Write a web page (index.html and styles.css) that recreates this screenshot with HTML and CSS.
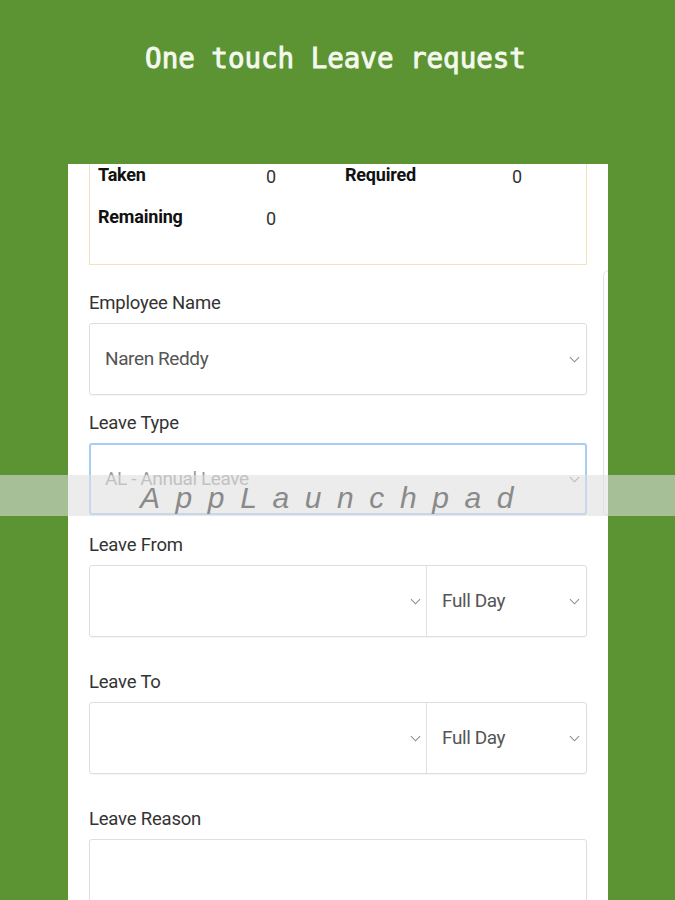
FILE: index.html
```html
<!DOCTYPE html>
<html>
<head>
<meta charset="utf-8">
<link rel="stylesheet" href="styles.css">
</head>
<body>
<header class="hero"><h1 class="title">One touch Leave request</h1></header>
<main class="panel">
  <div class="edge-card"></div>
  <section class="summary">
    <div class="s-label">Taken</div><div class="s-val">0</div><div class="s-label">Required</div><div class="s-val">0</div>
    <div class="s-label">Remaining</div><div class="s-val">0</div><div></div><div></div>
  </section>

  <div class="field f-emp">
    <div class="label">Employee Name</div>
    <div class="select"><span class="val">Naren Reddy</span><svg class="chev" viewBox="0 0 12 7"><path d="M1 1l5 5 5-5" fill="none" stroke="#8a8a8a" stroke-width="1.1"/></svg></div>
  </div>

  <div class="field f-type">
    <div class="label">Leave Type</div>
    <div class="select focus"><span class="val muted">AL - Annual Leave</span><svg class="chev" viewBox="0 0 12 7"><path d="M1 1l5 5 5-5" fill="none" stroke="#8a8a8a" stroke-width="1.1"/></svg></div>
  </div>

  <div class="field f-from">
    <div class="label">Leave From</div>
    <div class="split">
      <div class="part date"><span class="val"></span><svg class="chev" viewBox="0 0 12 7"><path d="M1 1l5 5 5-5" fill="none" stroke="#8a8a8a" stroke-width="1.1"/></svg></div>
      <div class="part day"><span class="val">Full Day</span><svg class="chev" viewBox="0 0 12 7"><path d="M1 1l5 5 5-5" fill="none" stroke="#8a8a8a" stroke-width="1.1"/></svg></div>
    </div>
  </div>

  <div class="field f-to">
    <div class="label">Leave To</div>
    <div class="split">
      <div class="part date"><span class="val"></span><svg class="chev" viewBox="0 0 12 7"><path d="M1 1l5 5 5-5" fill="none" stroke="#8a8a8a" stroke-width="1.1"/></svg></div>
      <div class="part day"><span class="val">Full Day</span><svg class="chev" viewBox="0 0 12 7"><path d="M1 1l5 5 5-5" fill="none" stroke="#8a8a8a" stroke-width="1.1"/></svg></div>
    </div>
  </div>

  <div class="field f-reason">
    <div class="label">Leave Reason</div>
    <div class="textarea"></div>
  </div>
</main>
<div class="watermark"><span>AppLaunchpad</span></div>
</body>
</html>
```

FILE: styles.css
```css
html, body {
  margin: 0;
  padding: 0;
  background: #5c9433;
  height: 900px;
  overflow: hidden;
}
body {
  font-family: Roboto, "Liberation Sans", sans-serif;
  position: relative;
}
.hero {
  height: 164px;
  display: flex;
  justify-content: center;
}
.title {
  margin: 38px 0 0 -4px;
  font-family: "DejaVu Sans Mono", monospace;
  font-weight: normal;
  font-size: 27.5px;
  line-height: 40px;
  color: #f4f8ee;
  letter-spacing: 0;
  -webkit-text-stroke: 0.9px #f4f8ee;
}
.panel {
  position: relative;
  margin-left: 68px;
  width: 540px;
  height: 736px;
  background: #fff;
  padding: 0 21px;
  box-sizing: border-box;
  overflow: hidden;
}
.edge-card {
  position: absolute;
  left: 535px;
  top: 106px;
  width: 20px;
  height: 246px;
  border: 1px solid #e2e2e2;
  border-radius: 6px;
  box-sizing: border-box;
}
.summary {
  border: 1px solid #f3e3bc;
  border-top: none;
  display: grid;
  grid-template-columns: 168px 79px 167px 1fr;
  grid-template-rows: 22px 22px;
  row-gap: 20px;
  padding: 0 0 37px 8px;
  height: 101px;
  box-sizing: border-box;
  font-size: 18px;
  line-height: 22px;
  color: #111;
}
.s-label {
  font-weight: bold;
  letter-spacing: -0.2px;
}
.s-val {
  color: #333;
  position: relative;
  top: 2px;
}
.field .label {
  font-size: 18.5px;
  line-height: 22px;
  color: #333;
  letter-spacing: -0.2px;
  margin-bottom: 9px;
}
.f-emp { margin-top: 27px; }
.f-type { margin-top: 17px; }
.f-from { margin-top: 19px; }
.f-to { margin-top: 34px; }
.f-reason { margin-top: 34px; }
.select, .split, .textarea {
  height: 72px;
  border: 1px solid #dedede;
  border-radius: 3px;
  box-sizing: border-box;
  box-shadow: 0 1px 1px rgba(0,0,0,0.04);
}
.select {
  display: flex;
  align-items: center;
  padding: 0 6px 0 15px;
}
.select.focus {
  border: 2px solid #a8cdf4;
  padding-left: 14px;
  padding-right: 5px;
}
.val {
  flex: 1;
  font-size: 19px;
  color: #555;
  letter-spacing: -0.4px;
  line-height: 22px;
}
.val.muted {
  color: #9a9a9a;
}
.chev {
  width: 11px;
  height: 7px;
  flex: none;
}
.split {
  display: flex;
}
.part {
  display: flex;
  align-items: center;
}
.part.date {
  width: 337px;
  border-right: 1px solid #e2e2e2;
  padding-right: 5px;
  box-sizing: border-box;
}
.part.day {
  flex: 1;
  padding: 0 6px 0 15px;
}
.textarea {
  height: 100px;
}
.watermark {
  position: absolute;
  left: 0;
  top: 475px;
  width: 675px;
  height: 41px;
  background: rgba(222, 222, 222, 0.58);
  display: flex;
  justify-content: center;
  align-items: center;
}
.watermark span {
  font-family: "Liberation Sans", Arial, sans-serif;
  font-style: italic;
  font-size: 30px;
  letter-spacing: 15.6px;
  color: #8a8a8a;
  margin-left: -6px;
  position: relative;
  top: 2px;
}
```
